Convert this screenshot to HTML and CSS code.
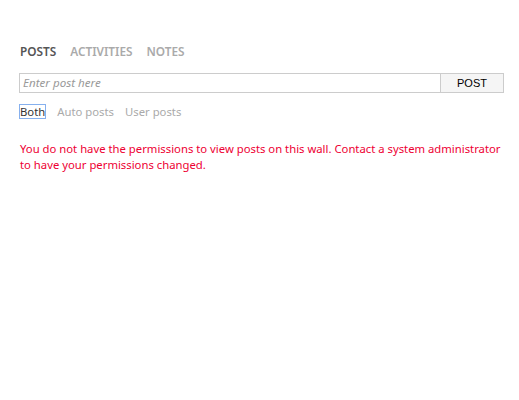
FILE: index.html
```html
<!DOCTYPE html>
<html>
<head>
<meta charset="utf-8">
<link rel="stylesheet" href="styles.css">
</head>
<body>
<div class="wall">
  <nav class="tabs">
    <span class="tab active">POSTS</span>
    <span class="tab">ACTIVITIES</span>
    <span class="tab">NOTES</span>
  </nav>
  <div class="composer">
    <div class="input">Enter post here</div>
    <div class="btn">POST</div>
  </div>
  <div class="filters">
    <span class="filter active">Both</span>
    <span class="filter">Auto posts</span>
    <span class="filter">User posts</span>
  </div>
  <p class="error">You do not have the permissions to view posts on this wall. Contact a system administrator to have your permissions changed.</p>
</div>
</body>
</html>
```

FILE: styles.css
```css
html, body {
  margin: 0;
  padding: 0;
  background: #fff;
}
body {
  font-family: "Noto Sans", "Open Sans", sans-serif;
  font-size: 11.3px;
}
.wall {
  padding: 42px 15px 0 19px;
}
.tabs {
  display: flex;
  gap: 14px;
  padding-left: 1px;
  height: 18px;
  align-items: center;
}
.tab {
  font-weight: 600;
  color: #aaa;
  font-size: 11.8px;
}
.tab.active {
  color: #555;
}
.composer {
  display: flex;
  margin-top: 13px;
  height: 20px;
}
.input {
  flex: 1;
  border: 1px solid #ccc;
  border-right: none;
  color: #999;
  font-style: italic;
  font-size: 11.6px;
  padding-left: 3px;
  line-height: 18px;
}
.btn {
  width: 62px;
  border: 1px solid #ccc;
  background: #f5f5f5;
  font-family: "Liberation Sans", Arial, sans-serif;
  font-size: 11px;
  color: #000;
  text-align: center;
  line-height: 18px;
}
.filters {
  display: flex;
  gap: 11px;
  margin-top: 11px;
  height: 15px;
  align-items: center;
}
.filter {
  color: #aaa;
  line-height: 13px;
}
.filter.active {
  color: #333;
  border: 1px solid #86b0ee;
}
.error {
  color: #ee0033;
  margin: 22px 0 0 1px;
  line-height: 16px;
}
```
